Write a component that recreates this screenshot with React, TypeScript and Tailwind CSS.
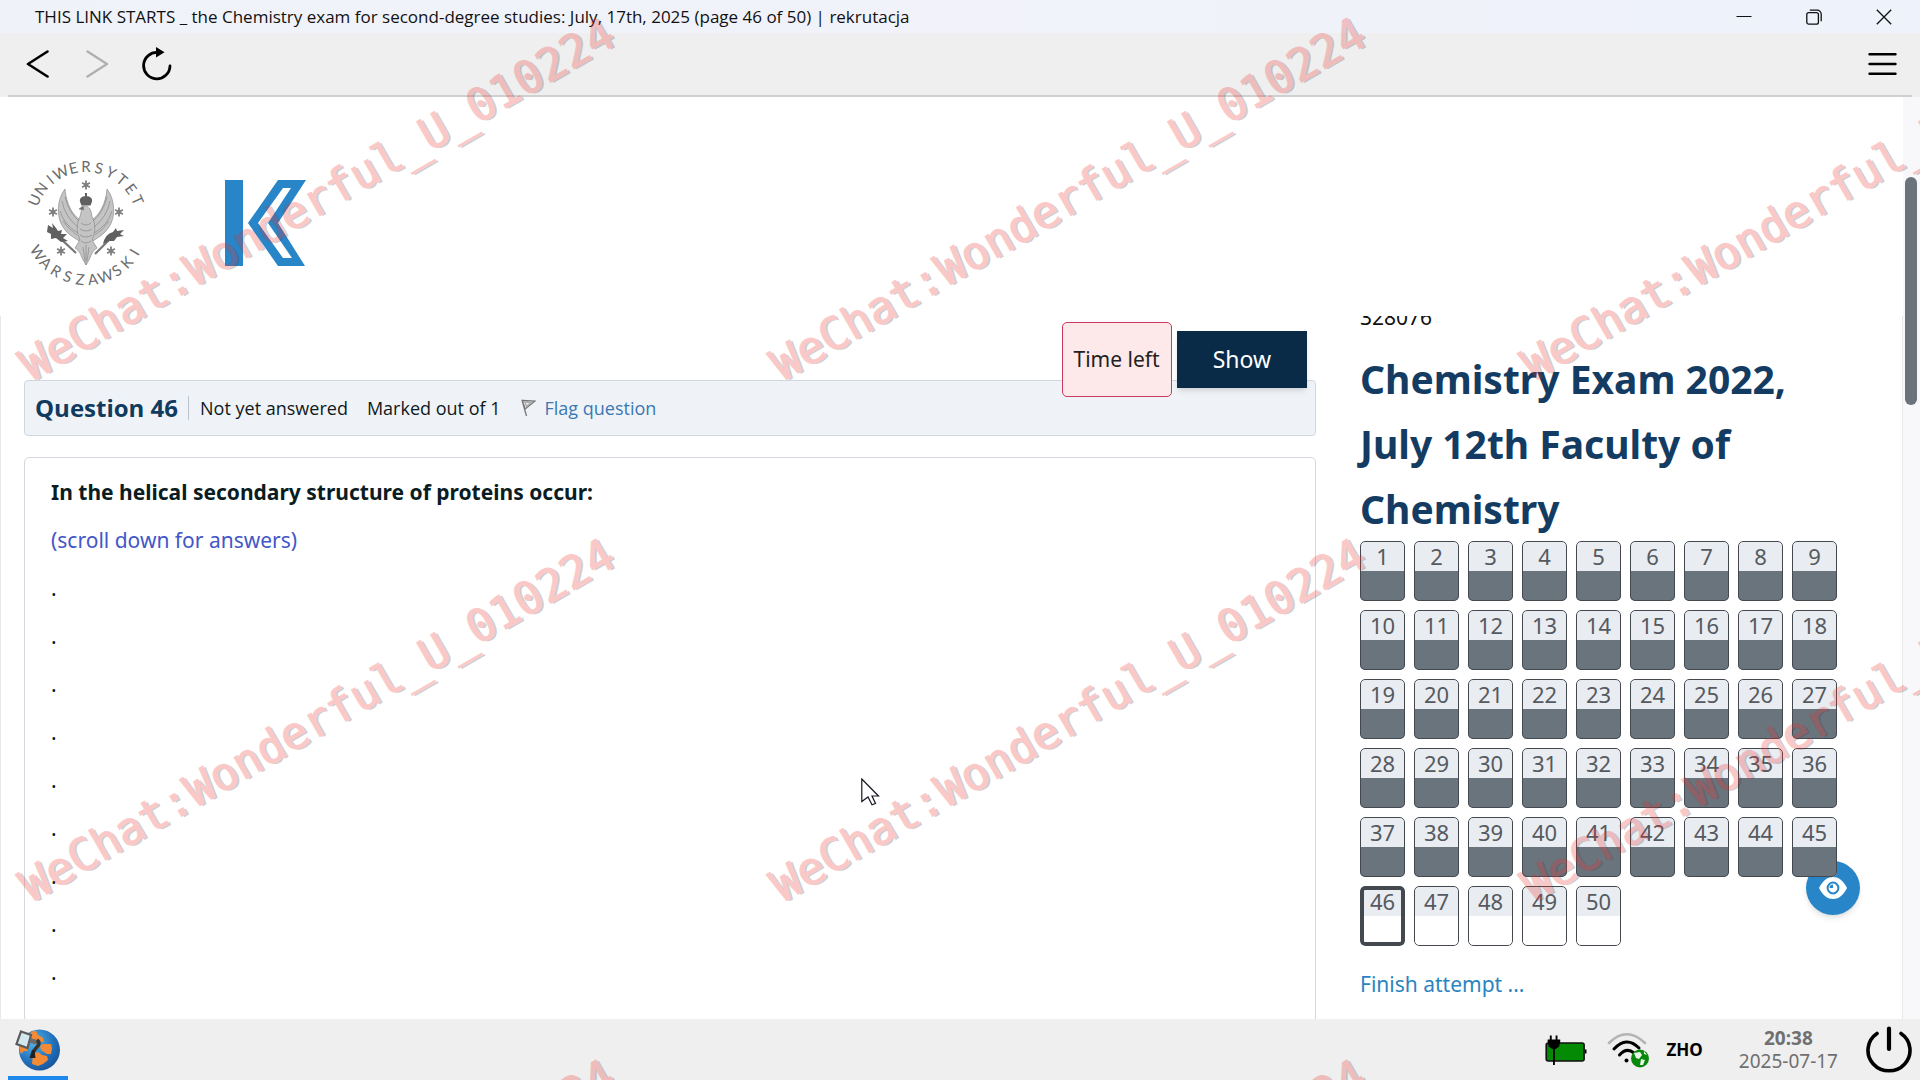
import React from "react";

const QUESTION_COUNT = 50;
const ANSWERED_COUNT = 45;
const CURRENT_QUESTION = 46;
const WATERMARK = "WeChat:Wonderful_U_010224";

const questions = Array.from({ length: QUESTION_COUNT }, (_, i) => i + 1);
const tiles = Array.from({ length: 9 }, (_, i) => i);

function TitleBar() {
  return (
    <div className="flex h-[33px] shrink-0 items-center justify-between bg-linear-to-r from-[#eff3f9] via-[#f1f2fa] to-[#eef2fa] pl-[35px] pr-5 pt-px">
      <h1 className="font-['Open_Sans',sans-serif] text-[17px] leading-6 text-[#111]">
        THIS LINK STARTS _ the Chemistry exam for second-degree studies: July, 17th, 2025 (page 46 of 50) | rekrutacja
      </h1>
      <div className="flex items-center gap-[38px]">
        <button type="button" aria-label="Minimize" className="flex size-8 items-center justify-center">
          <svg width="16" height="16" viewBox="0 0 16 16" fill="none" stroke="#111" strokeWidth="1">
            <path d="M0.500 7.500h15" />
          </svg>
        </button>
        <button type="button" aria-label="Restore" className="flex size-8 items-center justify-center">
          <svg width="16" height="16" viewBox="0 0 16 16" fill="none" stroke="#111" strokeWidth="1.3">
            <rect x="0.8" y="3.6" width="11.6" height="11.6" rx="2" />
            <path d="M3.8 1.2h7.4a4 4 0 0 1 4 4v7" />
          </svg>
        </button>
        <button type="button" aria-label="Close" className="flex size-8 items-center justify-center">
          <svg width="16" height="16" viewBox="0 0 16 16" fill="none" stroke="#111" strokeWidth="1.3">
            <path d="M0.8 0.8l14.4 14.4M15.2 0.8L0.8 15.2" />
          </svg>
        </button>
      </div>
    </div>
  );
}

function ToolBar() {
  return (
    <div className="shrink-0 bg-[#efefef] px-2">
      <div className="flex h-16 items-center justify-between border-b-2 border-[#d0d0d0] pl-[18px] pr-[15px]">
        <div className="flex items-center gap-9">
          <button type="button" aria-label="Back">
            <svg width="24" height="28" viewBox="0 0 24 28" fill="none" stroke="#000" strokeWidth="2.6" strokeLinecap="round" strokeLinejoin="round">
              <path d="M21.5 1.5L2 14l19.500 12.500" />
            </svg>
          </button>
          <button type="button" aria-label="Forward" disabled>
            <svg width="24" height="28" viewBox="0 0 24 28" fill="none" stroke="#b0b0b0" strokeWidth="2.4" strokeLinecap="round" strokeLinejoin="round">
              <path d="M1.500 1.500L21 14L1.500 26.500" />
            </svg>
          </button>
          <button type="button" aria-label="Reload" className="-ml-1">
            <svg width="30" height="34" viewBox="0 0 30 34" fill="none" stroke="#000" strokeWidth="2.800" strokeLinecap="round">
              <path d="M28 19A13.200 13.200 0 1 1 16 5.500" />
              <path d="M14 0L22.500 5.200L14 10.600z" fill="#000" stroke="none" />
            </svg>
          </button>
        </div>
        <button type="button" aria-label="Menu">
          <svg width="29" height="24" viewBox="0 0 29 24" fill="none" stroke="#000" strokeWidth="2.400" strokeLinecap="round">
            <path d="M1.500 2.200h26M1.500 12h26M1.500 21.800h26" />
          </svg>
        </button>
      </div>
    </div>
  );
}

function Star({ x, y }: { x: number; y: number }) {
  return (
    <g transform={`translate(${x} ${y})`} stroke="#808080" strokeWidth="1.800">
      <path d="M0-4.500V4.500M-3.900-2.200L3.900 2.200M-3.900 2.200L3.900-2.200" />
      <circle r="2.200" fill="#808080" stroke="none" />
    </g>
  );
}

function UniversityLogo() {
  const top = "UNIWERSYTET".split("");
  const bottom = "WARSZAWSKI".split("");
  return (
    <svg width="120" height="132" viewBox="-60 -66 120 132" role="img" aria-label="Uniwersytet Warszawski">
      <g fontFamily="Lato, sans-serif" fontSize="15" fill="#6b6b6b" textAnchor="middle">
        {top.map((c, i) => (
          <text key={i} transform={`rotate(${-66 + i * 13.200}) translate(0 -51)`}>{c}</text>
        ))}
        {bottom.map((c, i) => (
          <text key={i} transform={`rotate(${58 - i * 13}) translate(0 62)`}>{c}</text>
        ))}
      </g>
      <Star x={0} y={-38} />
      <Star x={-33} y={-11} />
      <Star x={33} y={-11} />
      <Star x={-25} y={28} />
      <Star x={25} y={28} />
      <path d="M-5.500-20c-2-4 1-7 5.500-7s7.500 3 5.500 7l-1 2.500h-9zM-1-30h2v3h-2z" fill="#5f5f5f" />
      <g fill="#c4c4c4" stroke="#8c8c8c" strokeWidth="0.700">
        <path d="M-21-34C-29-24-30-6-23 4C-18 12-11 15-7 18L-3-2C-13-5-20-20-21-34z" />
        <path d="M21-34C29-24 30-6 23 4C18 12 11 15 7 18L3-2C13-5 20-20 21-34z" />
        <path d="M-4-16c3-2 6-1 8 2c2 4 1 6 3 10c3 7 2 14-1 21l5 8c-3 2-5 4-7 10l-4 7l-4-7c-2-6-4-8-7-10l5-8c-3-7-4-14-1-21c2-4 2-8 3-12z" />
        <path d="M-7-14l4-3l1 4z" fill="#666" />
      </g>
      <g fill="none" stroke="#7d7d7d" strokeWidth="0.600">
        <path d="M-24-22q3 16 16 26M-26-12q4 14 18 22M-23-2q5 8 14 14M24-22q-3 16-16 26M26-12q-4 14-18 22M23-2q-5 8-14 14" />
        <path d="M-21-26q4 16 14 24M21-26q-4 16-14 24M-5 0q5 4 10 0M-6 6q6 4 12 0M-6 12q6 4 12 0M-5 18q5 4 10 0M0 22v20M-3 24l2 14M3 24l-2 14" />
      </g>
      <path d="M-10 30L-24 17" stroke="#777" strokeWidth="2.200" />
      <path d="M-38 2l5 3l-1-5l4 5l2 3l4-1l-1 4l6 0l-4 4l5 3l-7 1l-5-4l-5 1l0-5l-4-2z" fill="#606060" />
      <path d="M9 31L24 16" stroke="#777" strokeWidth="2.200" />
      <path d="M17 21q2-10 10-12l3-4l1 3l7-1l-4 4l4 2l-7 1l-3 4l-5 0z" fill="#606060" />
    </svg>
  );
}

function KLogo() {
  return (
    <svg width="82" height="86" viewBox="0 0 82 86" fill="#2886c8" role="img" aria-label="K">
      <path d="M0 0h18v86H0z" />
      <path fillRule="evenodd" d="M53 0H81L53 43L80 86H53L23 43zM58 8L33 43L58 78H67L43 43L66 8z" />
    </svg>
  );
}

function QuestionColumn() {
  return (
    <main className="relative min-w-0 flex-1 pl-[23px] pt-16">
      <section className="flex h-14 items-center rounded-sm border border-[#cdd8e1] bg-[#eff3f7] px-[10px] font-['Open_Sans',sans-serif] text-[18px] text-[#101820]">
        <h2 className="text-[24px] font-bold leading-7 text-[#113a5f]">Question 46</h2>
        <span className="ml-[10px] mr-[11px] h-6 w-px bg-[#b9c3cb]" />
        <span>Not yet answered</span>
        <span className="ml-[19px]">Marked out of 1</span>
        <a href="#flag" className="ml-5 flex items-center gap-[9px] text-[#3a78b4]">
          <svg width="15" height="18" viewBox="0 0 15 18" fill="none" stroke="#777" strokeWidth="1.300">
            <path d="M1 1l4.500 16M1.300 1.500L14 2L4.200 10z" />
            <path d="M4 3.200L10 3.500L5.500 7.300z" stroke="#aaa" />
          </svg>
          Flag question
        </a>
      </section>
      <div className="absolute right-0 top-1.5 flex items-center gap-[5px] pr-[9px]">
        <div className="flex h-[75px] items-center rounded-[5px] border border-[#c93a60] bg-[#fde9e9] px-[11px] text-[21px] text-[#222]">
          Time left
        </div>
        <button type="button" className="h-[57px] bg-[#0a2b47] px-9 text-[23px] text-white shadow-md">Show</button>
      </div>
      <section className="mt-[21px] h-full rounded-[5px] border border-[#d3d9de] px-[26px] pt-[18px] text-[21px] leading-[33px] text-[#0b1c22]">
        <p className="mb-[15px] font-bold">In the helical secondary structure of proteins occur:</p>
        <p className="mb-[15px] text-[#4257c8]">(scroll down for answers)</p>
        {tiles.map((n) => (
          <p key={n} className="mb-[15px]">.</p>
        ))}
      </section>
    </main>
  );
}

function QuestionButton({ n }: { n: number }) {
  const frame = n === CURRENT_QUESTION ? "border-4" : "border";
  const lower = n <= ANSWERED_COUNT ? "bg-[#6a747d]" : "bg-white";
  return (
    <button type="button" className="relative z-10 h-[60px] w-[45px] overflow-hidden rounded-[5px] bg-[#e9ecf1]">
      <span className="flex h-[30px] items-center justify-center text-[22px] leading-[30px] text-[#555a60]">{n}</span>
      <span className={`block h-[30px] ${lower}`} />
      <span className={`absolute inset-0 rounded-[5px] border-[#43494f] ${frame}`} />
    </button>
  );
}

function Navigation() {
  return (
    <aside className="relative w-[586px] shrink-0 pl-11 text-[21px]">
      <p className="-mt-[15px] leading-8 text-[#111]">328076</p>
      <h2 className="mt-[13px] max-w-[470px] text-[39px] font-bold leading-[65px] text-[#143c62]">
        Chemistry Exam 2022, July 12th Faculty of Chemistry
      </h2>
      <nav aria-label="Quiz navigation" className="grid w-fit grid-cols-9 gap-[9px]">
        {questions.map((n) => (
          <QuestionButton key={n} n={n} />
        ))}
      </nav>
      <a href="#finish" className="mt-[22px] block w-fit leading-8 text-[#2a84bf]">Finish attempt ...</a>
      <button
        type="button"
        aria-label="Preview"
        className="absolute right-[42px] top-[545px] flex size-[54px] items-center justify-center rounded-full bg-[#2886c8] shadow-md"
      >
        <svg width="28" height="22" viewBox="0 0 28 22" fill="none">
          <path d="M0 11C4 3 9 0 14 0s10 3 14 11c-4 8-9 11-14 11S4 19 0 11z" fill="#fff" />
          <circle cx="14" cy="11" r="5.400" stroke="#2886c8" strokeWidth="2" />
          <path d="M14 7.500a3.500 3.500 0 0 0-3.500 3.500h3.500z" fill="#2886c8" />
        </svg>
      </button>
    </aside>
  );
}

function TaskBar() {
  return (
    <footer className="flex h-[61px] shrink-0 items-stretch justify-between bg-[#efefef] px-2">
      <button type="button" aria-label="Exam browser" className="flex w-[60px] flex-col items-center justify-between border-b-4 border-[#1f88ec] pt-[9px]">
        <svg width="46" height="44" viewBox="0 0 46 44">
          <defs>
            <radialGradient id="sea" cx="0.350" cy="0.300" r="0.800">
              <stop offset="0" stopColor="#59b4e0" />
              <stop offset="0.600" stopColor="#2372bd" />
              <stop offset="1" stopColor="#174f95" />
            </radialGradient>
          </defs>
          <circle cx="24.500" cy="22" r="20.500" fill="url(#sea)" />
          <g fill="#f58a35">
            <path d="M14 7q4-5 7-4l2 4l5 3l1 4l-6 0l-5-2z" />
            <path d="M5 17q1-3 6-1l3 2l-2 5l-3 0l-3 3q-2-4-1-9z" />
            <path d="M25 18l3-2l8 0l1 4l-1 6l-4 0l-6-4z" />
            <path d="M18 26l5-2l4 3l5 1l1 4l-5 4l-5 2l-6-2z" />
          </g>
          <path d="M6 3.500l10 3.500l-3.500 13l-11-4z" fill="#d3e7ef" stroke="#5a5a5a" strokeWidth="2.200" />
          <path d="M15 12.500l8 2" stroke="#6b6b6b" strokeWidth="4.500" />
          <path d="M22 12q4 3 0 7l-4 5" stroke="#333" strokeWidth="3.500" fill="none" />
          <path d="M14.500 30l2.500-8h2.500l1 8z" fill="#222" />
        </svg>
      </button>
      <div className="flex items-center">
        <svg width="42" height="32" viewBox="0 0 40 32" preserveAspectRatio="none" aria-label="Battery">
          <rect x="1.200" y="9" width="36" height="18" rx="2" fill="#058a05" stroke="#111" strokeWidth="1.600" />
          <path d="M38 15.500h1.500v4h-1.500z" />
          <path d="M5.500 1.500v5M11 1.500v5" stroke="#000" strokeWidth="1.800" />
          <path d="M2.500 5.500h12v2l-1 5l-3.500 2.500h-3l-3.500-2.500l-1-5z" />
          <path d="M8.500 14v17" stroke="#000" strokeWidth="1.800" />
        </svg>
        <svg className="ml-5" width="43" height="38" viewBox="0 0 43 38" fill="none" strokeLinecap="round" aria-label="Network">
          <path d="M2 12Q19.500-5.500 38 12" stroke="#b4b4b4" strokeWidth="2.600" />
          <path d="M7 18Q19.500 4.500 32 17" stroke="#000" strokeWidth="3" />
          <path d="M12.500 24Q19.500 16 27 22" stroke="#000" strokeWidth="3" />
          <circle cx="19.500" cy="29.500" r="2" fill="#000" />
          <circle cx="33" cy="27.500" r="9" fill="#07880b" />
          <path d="M27 22l6-1l2 3l-3 4l-3-1zM34 28l4 1l-2 5l-3 0zM37 20l3 4l-3-1z" fill="#e9f5e9" />
        </svg>
        <span className="ml-[17px] text-[17px] font-bold text-black">ZHO</span>
        <div className="ml-9 flex flex-col items-center text-[19px] leading-[23px] text-[#707070]">
          <span className="font-bold">20:38</span>
          <span>2025-07-17</span>
        </div>
        <button type="button" aria-label="Power" className="ml-7">
          <svg width="46" height="48" viewBox="0 0 46 48" fill="none" stroke="#000" strokeWidth="3.600" strokeLinecap="round">
            <path d="M11 7.500A21 20.500 0 1 0 35 7.500" />
            <path d="M23 2.500V23" strokeWidth="4.200" />
          </svg>
        </button>
      </div>
    </footer>
  );
}

function Watermark() {
  return (
    <div aria-hidden="true" className="pointer-events-none absolute inset-0 z-50 grid auto-rows-[521px] grid-cols-[repeat(3,751px)] overflow-hidden opacity-25">
      {tiles.map((n) => (
        <div key={n} className="pl-[35px] pt-[343px]">
          <span className="block w-fit origin-bottom-left -rotate-30 whitespace-nowrap font-['DejaVu_Sans_Mono',monospace] text-[45px] leading-[45px] text-[#f02a2a] [-webkit-text-stroke:1px_#f02a2a] [text-shadow:2px_2px_0_#3c3c3c]">
            {WATERMARK}
          </span>
        </div>
      ))}
    </div>
  );
}

function Cursor() {
  return (
    <svg className="pointer-events-none absolute left-[861px] top-[778px] z-40" width="19" height="28" viewBox="0 0 19 28" fill="#fff" stroke="#1a1522" strokeWidth="1.200">
      <path d="M0.800 1L17.500 18H11l3.500 7.500l-3.500 1.200l-4-7.700L0.800 23.500z" />
    </svg>
  );
}

export default function App() {
  return (
    <div className="relative flex h-screen flex-col overflow-hidden bg-white font-['Noto_Sans',sans-serif]">
      <TitleBar />
      <ToolBar />
      <div className="flex min-h-0 flex-1">
        <div className="flex min-w-0 flex-1 flex-col">
          <header className="flex h-[219px] shrink-0 items-center gap-[79px] pl-[26px] pt-[33px]">
            <UniversityLogo />
            <KLogo />
          </header>
          <div className="flex min-h-0 flex-1 overflow-hidden border-x border-[#e8e8ea]">
            <QuestionColumn />
            <Navigation />
          </div>
        </div>
        <div className="w-[17px] shrink-0 bg-[#f8f8fa] px-[2px] pt-20">
          <div className="h-[228px] w-3 rounded-full bg-[#6a737b]" />
        </div>
      </div>
      <TaskBar />
      <Cursor />
      <Watermark />
    </div>
  );
}
